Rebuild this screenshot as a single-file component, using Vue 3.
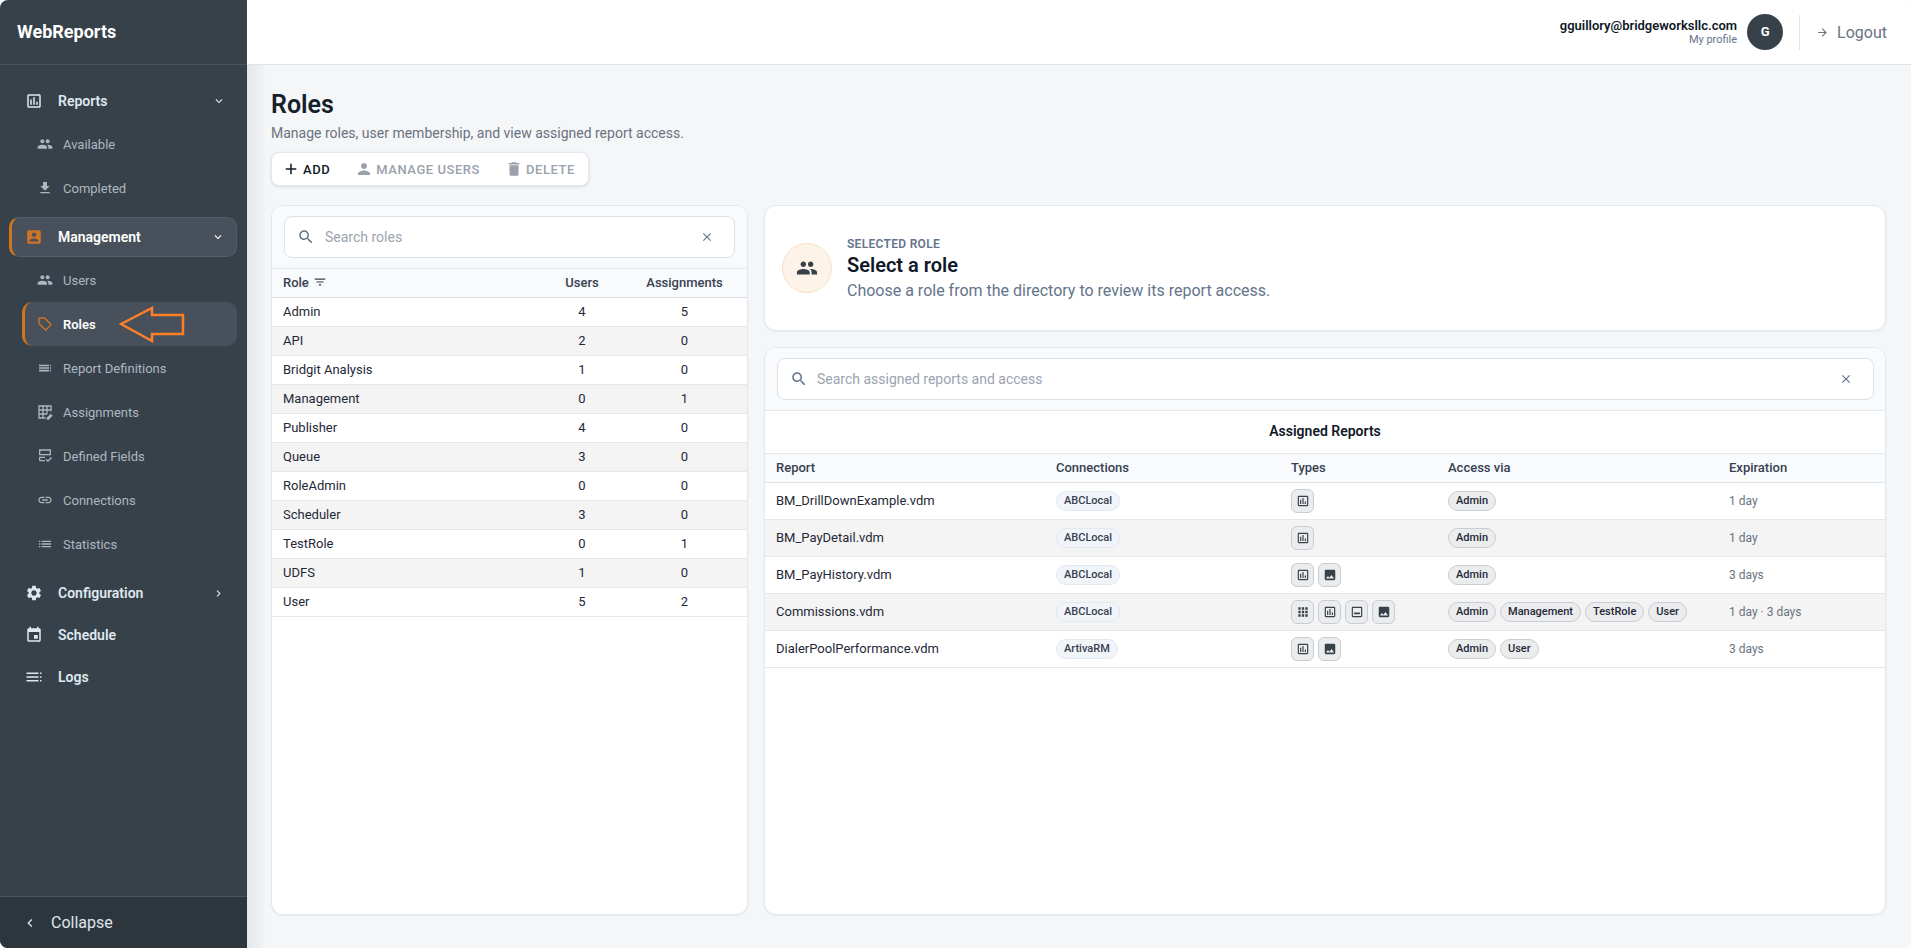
<script setup>
// material style icon paths, all on a 24 unit box
const icons = {
  assessment: "M19 3H5c-1.1 0-2 .9-2 2v14c0 1.1.9 2 2 2h14c1.1 0 2-.9 2-2V5c0-1.1-.9-2-2-2zm0 16H5V5h14v14zM9 17H7v-7h2v7zm4 0h-2V7h2v10zm4 0h-2v-4h2v4z",
  people: "M16 11c1.66 0 2.99-1.34 2.99-3S17.66 5 16 5c-1.66 0-3 1.34-3 3s1.34 3 3 3zm-8 0c1.66 0 2.99-1.34 2.99-3S9.66 5 8 5C6.34 5 5 6.34 5 8s1.34 3 3 3zm0 2c-2.33 0-7 1.17-7 3.5V19h14v-2.5c0-2.33-4.67-3.5-7-3.5zm8 0c-.29 0-.62.02-.97.05 1.16.84 1.97 1.97 1.97 3.45V19h6v-2.5c0-2.33-4.67-3.5-7-3.5z",
  download: "M19 9h-4V3H9v6H5l7 7 7-7zM5 18v2h14v-2H5z",
  accountBox: "M3 5v14c0 1.1.89 2 2 2h14c1.1 0 2-.9 2-2V5c0-1.1-.9-2-2-2H5c-1.11 0-2 .9-2 2zm12 4c0 1.66-1.34 3-3 3s-3-1.34-3-3 1.34-3 3-3 3 1.34 3 3zm-9 8c0-2 4-3.1 6-3.1s6 1.1 6 3.1v1H6v-1z",
  tag: "M21.41 11.58l-9-9C12.05 2.22 11.55 2 11 2H4c-1.1 0-2 .9-2 2v7c0 .55.22 1.05.59 1.42l9 9c.36.36.86.58 1.41.58s1.05-.22 1.41-.59l7-7c.37-.36.59-.86.59-1.41s-.23-1.06-.59-1.42zM13 20.01L4 11V4h7v-.01l9 9-7 7.02z",
  definitions: "M3 7h15v2.5H3zM3 10.8h15v2.5H3zM3 14.6h15v2.5H3zM19.5 7H21v2.5h-1.5zM19.5 10.8H21v2.5h-1.5zM19.5 14.6H21v2.5h-1.5z",
  grid: "M2 2h20v2H2zM2 8h20v2H2zM2 14h13v2H2zM2 20h11v2H2zM2 2h2v20H2zM8 2h2v20H8zM14 2h2v13h-2zM20 2h2v9h-2zM14.5 23.5v-3l6-6 3 3-6 6z",
  form: "M3 2h18v9H3zM5 4v5h14V4zM3 13h9v2H5v3h7v2H5a2 2 0 0 1-2-2zM13 18l1.5-1.5 2 2L21 13.5l1.5 1.5-6 6z",
  link: "M3.9 12c0-1.71 1.39-3.1 3.1-3.1h4V7H7c-2.76 0-5 2.24-5 5s2.24 5 5 5h4v-1.9H7c-1.71 0-3.1-1.39-3.1-3.1zM8 13h8v-2H8v2zm9-6h-4v1.9h4c1.71 0 3.1 1.39 3.1 3.1s-1.39 3.1-3.1 3.1h-4V17h4c2.76 0 5-2.24 5-5s-2.24-5-5-5z",
  list: "M3 13h2v-2H3v2zm0 4h2v-2H3v2zm0-8h2V7H3v2zm4 4h14v-2H7v2zm0 4h14v-2H7v2zM7 7v2h14V7H7z",
  gear: "M19.14 12.94c.04-.3.06-.61.06-.94 0-.32-.02-.64-.07-.94l2.03-1.58c.18-.14.23-.41.12-.61l-1.92-3.32c-.12-.22-.37-.29-.59-.22l-2.39.96c-.5-.38-1.03-.7-1.62-.94l-.36-2.54c-.04-.24-.24-.41-.48-.41h-3.84c-.24 0-.43.17-.47.41l-.36 2.54c-.59.24-1.13.57-1.62.94l-2.39-.96c-.22-.08-.47 0-.59.22L2.74 8.87c-.12.21-.08.47.12.61l2.03 1.58c-.05.3-.09.63-.09.94s.02.64.07.94l-2.03 1.58c-.18.14-.23.41-.12.61l1.92 3.32c.12.22.37.29.59.22l2.39-.96c.5.38 1.03.7 1.62.94l.36 2.54c.05.24.24.41.48.41h3.84c.24 0 .44-.17.47-.41l.36-2.54c.59-.24 1.13-.56 1.62-.94l2.39.96c.22.08.47 0 .59-.22l1.92-3.32c.12-.22.07-.47-.12-.61l-2.01-1.58zM12 15.6c-1.98 0-3.6-1.62-3.6-3.6s1.62-3.6 3.6-3.6 3.6 1.62 3.6 3.6-1.62 3.6-3.6 3.6z",
  event: "M17 12h-5v5h5v-5zM16 1v2H8V1H6v2H5c-1.11 0-1.99.9-1.99 2L3 19c0 1.1.89 2 2 2h14c1.1 0 2-.9 2-2V5c0-1.1-.9-2-2-2h-1V1h-2zm3 18H5V8h14v11z",
  logs: "M2 6h16v2H2zM2 11h16v2H2zM2 16h16v2H2zM20 6h2v2h-2zM20 11h2v2h-2zM20 16h2v2h-2z",
  search: "M15.5 14h-.79l-.28-.27C15.41 12.59 16 11.11 16 9.5 16 5.91 13.09 3 9.5 3S3 5.91 3 9.5 5.91 16 9.5 16c1.61 0 3.09-.59 4.23-1.57l.27.28v.79l5 4.99L20.49 19l-4.99-5zm-6 0C7.01 14 5 11.99 5 9.5S7.01 5 9.5 5 14 7.01 14 9.5 11.99 14 9.5 14z",
  close: "M19 6.41L17.59 5 12 10.59 6.41 5 5 6.41 10.59 12 5 17.59 6.41 19 12 13.41 17.59 19 19 17.59 13.41 12z",
  add: "M19 13h-6v6h-2v-6H5v-2h6V5h2v6h6v2z",
  person: "M12 12c2.21 0 4-1.79 4-4s-1.79-4-4-4-4 1.79-4 4 1.79 4 4 4zm0 2c-2.67 0-8 1.34-8 4v2h16v-2c0-2.66-5.33-4-8-4z",
  trash: "M6 19c0 1.1.9 2 2 2h8c1.1 0 2-.9 2-2V7H6v12zM19 4h-3.5l-1-1h-5l-1 1H5v2h14V4z",
  filter: "M10 18h4v-2h-4v2zM3 6v2h18V6H3zm3 7h12v-2H6v2z",
  down: "M16.59 8.59L12 13.17 7.41 8.59 6 10l6 6 6-6z",
  right: "M10 6L8.59 7.41 13.17 12l-4.58 4.59L10 18l6-6z",
  left: "M15.41 7.41L14 6l-6 6 6 6 1.41-1.41L10.83 12z",
  arrow: "M12 4l-1.41 1.41L16.17 11H4v2h12.17l-5.58 5.59L12 20l8-8z",
  apps: "M4 8h4V4H4v4zm6 12h4v-4h-4v4zm-6 0h4v-4H4v4zm0-6h4v-4H4v4zm6 0h4v-4h-4v4zm6-10v4h4V4h-4zm-6 4h4V4h-4v4zm6 6h4v-4h-4v4zm0 6h4v-4h-4v4z",
  form2: "M19 3H5c-1.1 0-2 .9-2 2v14c0 1.1.9 2 2 2h14c1.1 0 2-.9 2-2V5c0-1.1-.9-2-2-2zm0 16H5V5h14v14zM7 13h10v3H7z",
  photo: "M21 19V5c0-1.1-.9-2-2-2H5c-1.1 0-2 .9-2 2v14c0 1.1.9 2 2 2h14c1.1 0 2-.9 2-2zM8.5 13.5l2.5 3.01L14.5 12l4.5 6H5l3.5-4.5z",
};

const reportsNav = [
  { label: "Available", icon: "people" },
  { label: "Completed", icon: "download" },
];
const managementNav = [
  { label: "Users", icon: "people" },
  { label: "Roles", icon: "tag", active: true },
  { label: "Report Definitions", icon: "definitions" },
  { label: "Assignments", icon: "grid" },
  { label: "Defined Fields", icon: "form" },
  { label: "Connections", icon: "link" },
  { label: "Statistics", icon: "list" },
];

const roles = [
  { name: "Admin", users: 4, assignments: 5 },
  { name: "API", users: 2, assignments: 0 },
  { name: "Bridgit Analysis", users: 1, assignments: 0 },
  { name: "Management", users: 0, assignments: 1 },
  { name: "Publisher", users: 4, assignments: 0 },
  { name: "Queue", users: 3, assignments: 0 },
  { name: "RoleAdmin", users: 0, assignments: 0 },
  { name: "Scheduler", users: 3, assignments: 0 },
  { name: "TestRole", users: 0, assignments: 1 },
  { name: "UDFS", users: 1, assignments: 0 },
  { name: "User", users: 5, assignments: 2 },
];

const reports = [
  { name: "BM_DrillDownExample.vdm", conn: "ABCLocal", types: ["assessment"], access: ["Admin"], exp: "1 day" },
  { name: "BM_PayDetail.vdm", conn: "ABCLocal", types: ["assessment"], access: ["Admin"], exp: "1 day" },
  { name: "BM_PayHistory.vdm", conn: "ABCLocal", types: ["assessment", "photo"], access: ["Admin"], exp: "3 days" },
  { name: "Commissions.vdm", conn: "ABCLocal", types: ["apps", "assessment", "form2", "photo"], access: ["Admin", "Management", "TestRole", "User"], exp: "1 day · 3 days" },
  { name: "DialerPoolPerformance.vdm", conn: "ArtivaRM", types: ["assessment", "photo"], access: ["Admin", "User"], exp: "3 days" },
];
</script>

<template>
  <div class="shell">
    <aside class="sidebar">
      <div class="brand">WebReports</div>
      <nav class="nav">
        <div class="nav-top">
          <svg class="top-icon" viewBox="0 0 24 24"><path :d="icons.assessment" /></svg>
          <span>Reports</span>
          <svg class="chev" viewBox="0 0 24 24"><path :d="icons.down" /></svg>
        </div>
        <div class="sub-list">
          <div v-for="item in reportsNav" :key="item.label" class="nav-sub">
            <svg class="sub-icon" viewBox="0 0 24 24"><path :d="icons[item.icon]" /></svg>
            <span>{{ item.label }}</span>
          </div>
        </div>

        <div class="nav-top open">
          <svg class="top-icon" viewBox="0 0 24 24"><path :d="icons.accountBox" /></svg>
          <span>Management</span>
          <svg class="chev" viewBox="0 0 24 24"><path :d="icons.down" /></svg>
        </div>
        <div class="sub-list">
          <div v-for="item in managementNav" :key="item.label" class="nav-sub" :class="{ active: item.active }">
            <svg class="sub-icon" viewBox="0 0 24 24"><path :d="icons[item.icon]" /></svg>
            <span>{{ item.label }}</span>
          </div>
        </div>

        <div class="nav-top plain first">
          <svg class="top-icon" viewBox="0 0 24 24"><path :d="icons.gear" /></svg>
          <span>Configuration</span>
          <svg class="chev side" viewBox="0 0 24 24"><path :d="icons.right" /></svg>
        </div>
        <div class="nav-top plain">
          <svg class="top-icon" viewBox="0 0 24 24"><path :d="icons.event" /></svg>
          <span>Schedule</span>
        </div>
        <div class="nav-top plain">
          <svg class="top-icon" viewBox="0 0 24 24"><path :d="icons.logs" /></svg>
          <span>Logs</span>
        </div>
      </nav>
      <div class="collapse">
        <svg viewBox="0 0 24 24"><path :d="icons.left" /></svg>
        <span>Collapse</span>
      </div>

      <!-- annotation arrow drawn over the screenshot -->
      <svg class="callout" viewBox="0 0 66 38">
        <path d="M2 18 L33 2 V9 H64 V28 H33 V35 Z" />
      </svg>
    </aside>

    <div class="main">
      <header class="topbar">
        <div class="who">
          <div class="email">gguillory@bridgeworksllc.com</div>
          <div class="profile">My profile</div>
        </div>
        <div class="avatar">G</div>
        <div class="divider"></div>
        <div class="logout">
          <svg viewBox="0 0 24 24"><path :d="icons.arrow" /></svg>
          <span>Logout</span>
        </div>
      </header>

      <main class="content">
        <h1>Roles</h1>
        <p class="lead">Manage roles, user membership, and view assigned report access.</p>
        <div class="toolbar">
          <button class="tool on">
            <svg viewBox="0 0 24 24"><path :d="icons.add" /></svg>ADD
          </button>
          <button class="tool">
            <svg viewBox="0 0 24 24"><path :d="icons.person" /></svg>MANAGE USERS
          </button>
          <button class="tool">
            <svg viewBox="0 0 24 24"><path :d="icons.trash" /></svg>DELETE
          </button>
        </div>

        <div class="columns">
          <section class="card directory">
            <div class="search-wrap">
              <div class="search">
                <svg class="s-icon" viewBox="0 0 24 24"><path :d="icons.search" /></svg>
                <span class="ph">Search roles</span>
                <svg class="x-icon" viewBox="0 0 24 24"><path :d="icons.close" /></svg>
              </div>
            </div>
            <div class="role-row head">
              <div class="role-name">
                Role
                <svg viewBox="0 0 24 24"><path :d="icons.filter" /></svg>
              </div>
              <div class="mid">Users</div>
              <div class="mid">Assignments</div>
            </div>
            <div v-for="r in roles" :key="r.name" class="role-row">
              <div class="role-name">{{ r.name }}</div>
              <div class="mid">{{ r.users }}</div>
              <div class="mid">{{ r.assignments }}</div>
            </div>
          </section>

          <div class="detail">
            <section class="card selected">
              <div class="circle">
                <svg viewBox="0 0 24 24"><path :d="icons.people" /></svg>
              </div>
              <div class="sel-body">
                <div class="eyebrow">SELECTED ROLE</div>
                <div class="sel-title">Select a role</div>
                <div class="sel-text">Choose a role from the directory to review its report access.</div>
              </div>
            </section>

            <section class="card assigned">
              <div class="search-wrap">
                <div class="search">
                  <svg class="s-icon" viewBox="0 0 24 24"><path :d="icons.search" /></svg>
                  <span class="ph">Search assigned reports and access</span>
                  <svg class="x-icon" viewBox="0 0 24 24"><path :d="icons.close" /></svg>
                </div>
              </div>
              <div class="caption">Assigned Reports</div>
              <div class="rep-row head">
                <div>Report</div>
                <div>Connections</div>
                <div>Types</div>
                <div>Access via</div>
                <div>Expiration</div>
              </div>
              <div v-for="rep in reports" :key="rep.name" class="rep-row">
                <div>{{ rep.name }}</div>
                <div><span class="chip conn">{{ rep.conn }}</span></div>
                <div class="types">
                  <span v-for="(t, i) in rep.types" :key="i" class="type-btn">
                    <svg viewBox="0 0 24 24"><path :d="icons[t]" /></svg>
                  </span>
                </div>
                <div class="chips">
                  <span v-for="a in rep.access" :key="a" class="chip acc">{{ a }}</span>
                </div>
                <div class="exp">{{ rep.exp }}</div>
              </div>
            </section>
          </div>
        </div>
      </main>
    </div>
  </div>
</template>

<style>
body {
  background: #fff;
}
</style>

<style scoped>
.shell {
  display: flex;
  height: 948px;
  border-radius: 8px;
  overflow: hidden;
  background: #f4f6f8;
  font-family: Roboto, "Liberation Sans", sans-serif;
  color: #111827;
}

svg {
  fill: currentColor;
  display: block;
  flex: none;
}

/* sidebar */
.sidebar {
  position: relative;
  width: 247px;
  flex: none;
  display: flex;
  flex-direction: column;
  background: #37414a;
}
.brand {
  height: 65px;
  box-sizing: border-box;
  border-bottom: 1px solid #4a545d;
  padding-left: 17px;
  line-height: 63px;
  font-size: 18px;
  font-weight: 700;
  color: #fff;
}
.nav {
  flex: 1;
  padding-top: 16px;
}
.nav-top {
  display: flex;
  align-items: center;
  box-sizing: border-box;
  height: 40px;
  margin: 0 10px 0 9px;
  padding: 0 11px 0 16px;
  gap: 15px;
  font-size: 14px;
  font-weight: 600;
  color: #dfe8f0;
}
.nav-top span {
  flex: 1;
}
.nav-top.open {
  margin-top: 7px;
  padding-left: 13px;
  border: 1px solid #545d66;
  border-left: 3px solid #d0751f;
  border-radius: 10px;
  background: #48515b;
  color: #fff;
}
.nav-top.open .top-icon {
  color: #cf7424;
}
.nav-top.plain {
  height: 42px;
}
.nav-top.first {
  margin-top: 6px;
}
.top-icon {
  width: 18px;
  height: 18px;
}
.chev {
  width: 14px;
  height: 14px;
}
.chev.side {
  margin-right: 1px;
  width: 13px;
  height: 13px;
}
.sub-list {
  margin-top: 1px;
}
.nav-sub {
  display: flex;
  align-items: center;
  box-sizing: border-box;
  height: 44px;
  margin: 0 10px 0 22px;
  padding-left: 15px;
  gap: 10px;
  font-size: 13px;
  font-weight: 400;
  color: #aeb7c0;
}
.nav-sub.active {
  padding-left: 12px;
  border-left: 3px solid #d0751f;
  border-radius: 10px;
  background: #48515b;
  color: #fff;
  font-weight: 600;
}
.nav-sub.active .sub-icon {
  color: #cf7424;
}
.sub-icon {
  width: 16px;
  height: 16px;
}
.collapse {
  height: 52px;
  box-sizing: border-box;
  border-top: 1px solid #4a545d;
  background: #2e363d;
  display: flex;
  align-items: center;
  padding-left: 22px;
  gap: 13px;
  font-size: 16px;
  color: #dfe6ec;
}
.collapse svg {
  width: 16px;
  height: 16px;
}
.callout {
  position: absolute;
  left: 119px;
  top: 306px;
  width: 66px;
  height: 38px;
  fill: none;
}
.callout path {
  fill: none;
  stroke: #ff7f27;
  stroke-width: 2.5;
}

/* top bar */
.main {
  flex: 1;
  min-width: 0;
  display: flex;
  flex-direction: column;
  background: linear-gradient(90deg, #e4e7eb 0, #f4f6f8 20px);
}
.topbar {
  height: 65px;
  flex: none;
  box-sizing: border-box;
  background: #fff;
  border-bottom: 1px solid #dde4ec;
  display: flex;
  align-items: center;
  justify-content: flex-end;
  padding-right: 24px;
}
.who {
  text-align: right;
}
.email {
  font-size: 13px;
  font-weight: 600;
  line-height: 15px;
  color: #111827;
}
.profile {
  font-size: 11px;
  line-height: 13px;
  color: #64748b;
}
.avatar {
  width: 36px;
  height: 36px;
  margin-left: 10px;
  border-radius: 50%;
  background: #37414a;
  color: #fff;
  font-size: 13px;
  font-weight: 700;
  text-align: center;
  line-height: 36px;
}
.divider {
  width: 1px;
  height: 35px;
  margin: 0 16px 0 16px;
  background: #dde4ec;
}
.logout {
  display: flex;
  align-items: center;
  gap: 8px;
  font-size: 16px;
  color: #6b7280;
}
.logout svg {
  width: 13px;
  height: 13px;
}

/* page */
.content {
  flex: 1;
  min-height: 0;
  display: flex;
  flex-direction: column;
  box-sizing: border-box;
  padding: 24px 25px 33px 24px;
}
h1 {
  margin: 0;
  font-size: 25px;
  line-height: 32px;
  font-weight: 600;
  color: #15202b;
}
.lead {
  margin: 4px 0 0;
  font-size: 14px;
  line-height: 16px;
  color: #6b7280;
}
.toolbar {
  align-self: flex-start;
  display: flex;
  box-sizing: border-box;
  width: 318px;
  height: 34px;
  margin-top: 11px;
  padding-left: 10px;
  background: #fff;
  border: 1px solid #e2e8f0;
  border-radius: 8px;
  box-shadow: 0 1px 3px rgba(15, 23, 42, 0.12);
}
.tool {
  display: flex;
  align-items: center;
  flex: none;
  gap: 3px;
  padding: 0;
  margin-right: 25px;
  border: 0;
  background: none;
  white-space: nowrap;
  font: 500 13px Roboto, sans-serif;
  letter-spacing: 0.55px;
  color: #9aa1ab;
}
.tool svg {
  width: 18px;
  height: 18px;
}
.tool.on {
  color: #111827;
}
.columns {
  flex: 1;
  min-height: 0;
  display: flex;
  gap: 16px;
  margin-top: 19px;
}
.card {
  background: #fff;
  border: 1px solid #e2e8f0;
  border-radius: 12px;
  box-shadow: 0 1px 2px rgba(15, 23, 42, 0.05);
  overflow: hidden;
  box-sizing: border-box;
}
.directory {
  width: 477px;
  flex: none;
}
.detail {
  flex: 1;
  min-width: 0;
  display: flex;
  flex-direction: column;
  gap: 16px;
}
.search-wrap {
  height: 63px;
  box-sizing: border-box;
  padding: 10px 12px 0 12px;
  background: #f8fafc;
  border-bottom: 1px solid #e2e8f0;
}
.assigned .search-wrap {
  padding-right: 11px;
}
.search {
  height: 42px;
  box-sizing: border-box;
  display: flex;
  align-items: center;
  background: #fff;
  border: 1px solid #dbe2ea;
  border-radius: 8px;
  padding: 0 20px 0 12px;
  gap: 10px;
}
.assigned .search {
  gap: 9px;
}
.s-icon {
  width: 18px;
  height: 18px;
  color: #64748b;
}
.x-icon {
  width: 14px;
  height: 14px;
  color: #64748b;
}
.ph {
  flex: 1;
  font-size: 14px;
  color: #9ca3af;
}

/* role table */
.role-row {
  display: grid;
  grid-template-columns: 1fr 80px 125px;
  align-items: center;
  height: 29px;
  box-sizing: border-box;
  padding-bottom: 1px;
  border-bottom: 1px solid #e5e7eb;
  font-size: 13px;
  color: #1f2937;
}
.role-row:nth-child(even):not(.head) {
  background: #f4f4f5;
}
.role-row.head {
  padding-bottom: 2px;
  background: #f8fafc;
  border-bottom-color: #dde3ea;
  font-weight: 500;
  color: #374151;
}
.role-name {
  padding-left: 11px;
  display: flex;
  align-items: center;
  gap: 4px;
}
.role-name svg {
  width: 14px;
  height: 14px;
}
.mid {
  text-align: center;
}

/* selected role */
.selected {
  height: 126px;
  flex: none;
  display: flex;
  align-items: center;
  padding-left: 17px;
  gap: 15px;
}
.circle {
  width: 50px;
  height: 50px;
  box-sizing: border-box;
  border-radius: 50%;
  background: #fdf3e8;
  border: 1px solid #f5dfc8;
  display: flex;
  align-items: center;
  justify-content: center;
  color: #37414a;
}
.circle svg {
  width: 22px;
  height: 22px;
}
.sel-body {
  margin-top: 1px;
}
.eyebrow {
  font-size: 12px;
  letter-spacing: 0.3px;
  line-height: 14px;
  font-weight: 600;
  color: #64748b;
}
.sel-title {
  margin-top: 2px;
  font-size: 20px;
  line-height: 24px;
  font-weight: 600;
  color: #111827;
}
.sel-text {
  margin-top: 4px;
  font-size: 16px;
  line-height: 19px;
  color: #64748b;
}

/* assigned reports */
.assigned {
  flex: 1;
  min-height: 0;
}
.caption {
  height: 43px;
  box-sizing: border-box;
  border-bottom: 1px solid #e2e8f0;
  text-align: center;
  line-height: 40px;
  font-size: 14px;
  font-weight: 600;
  color: #111827;
}
.rep-row {
  display: grid;
  grid-template-columns: 281px 235px 157px 281px 1fr;
  align-items: center;
  height: 37px;
  box-sizing: border-box;
  padding-bottom: 1px;
  border-bottom: 1px solid #e5e7eb;
  font-size: 13px;
  color: #1f2937;
}
.rep-row > div {
  padding-left: 10px;
}
.rep-row > div:first-child {
  padding-left: 11px;
}
.rep-row:nth-child(odd):not(.head) {
  background: #f4f4f5;
}
.rep-row.head {
  height: 29px;
  background: #f8fafc;
  border-bottom-color: #dde3ea;
  font-weight: 500;
  color: #374151;
}
.chip {
  display: inline-block;
  box-sizing: border-box;
  height: 20px;
  line-height: 18px;
  padding: 0 7px;
  border-radius: 10px;
  font-size: 11px;
  font-weight: 500;
}
.conn {
  background: #f1f5f9;
  border: 1px solid #e2e8f0;
  color: #374151;
}
.acc {
  background: #ebecee;
  border: 1px solid #c9ccd1;
  color: #1f2937;
}
.chips,
.types {
  display: flex;
  gap: 4px;
}
.type-btn {
  width: 23px;
  height: 24px;
  box-sizing: border-box;
  background: #ebecee;
  border: 1px solid #c9ccd1;
  border-radius: 6px;
  display: flex;
  align-items: center;
  justify-content: center;
  color: #37414a;
}
.type-btn svg {
  width: 14px;
  height: 14px;
}
.exp {
  font-size: 12px;
  color: #6b7280;
}
</style>
